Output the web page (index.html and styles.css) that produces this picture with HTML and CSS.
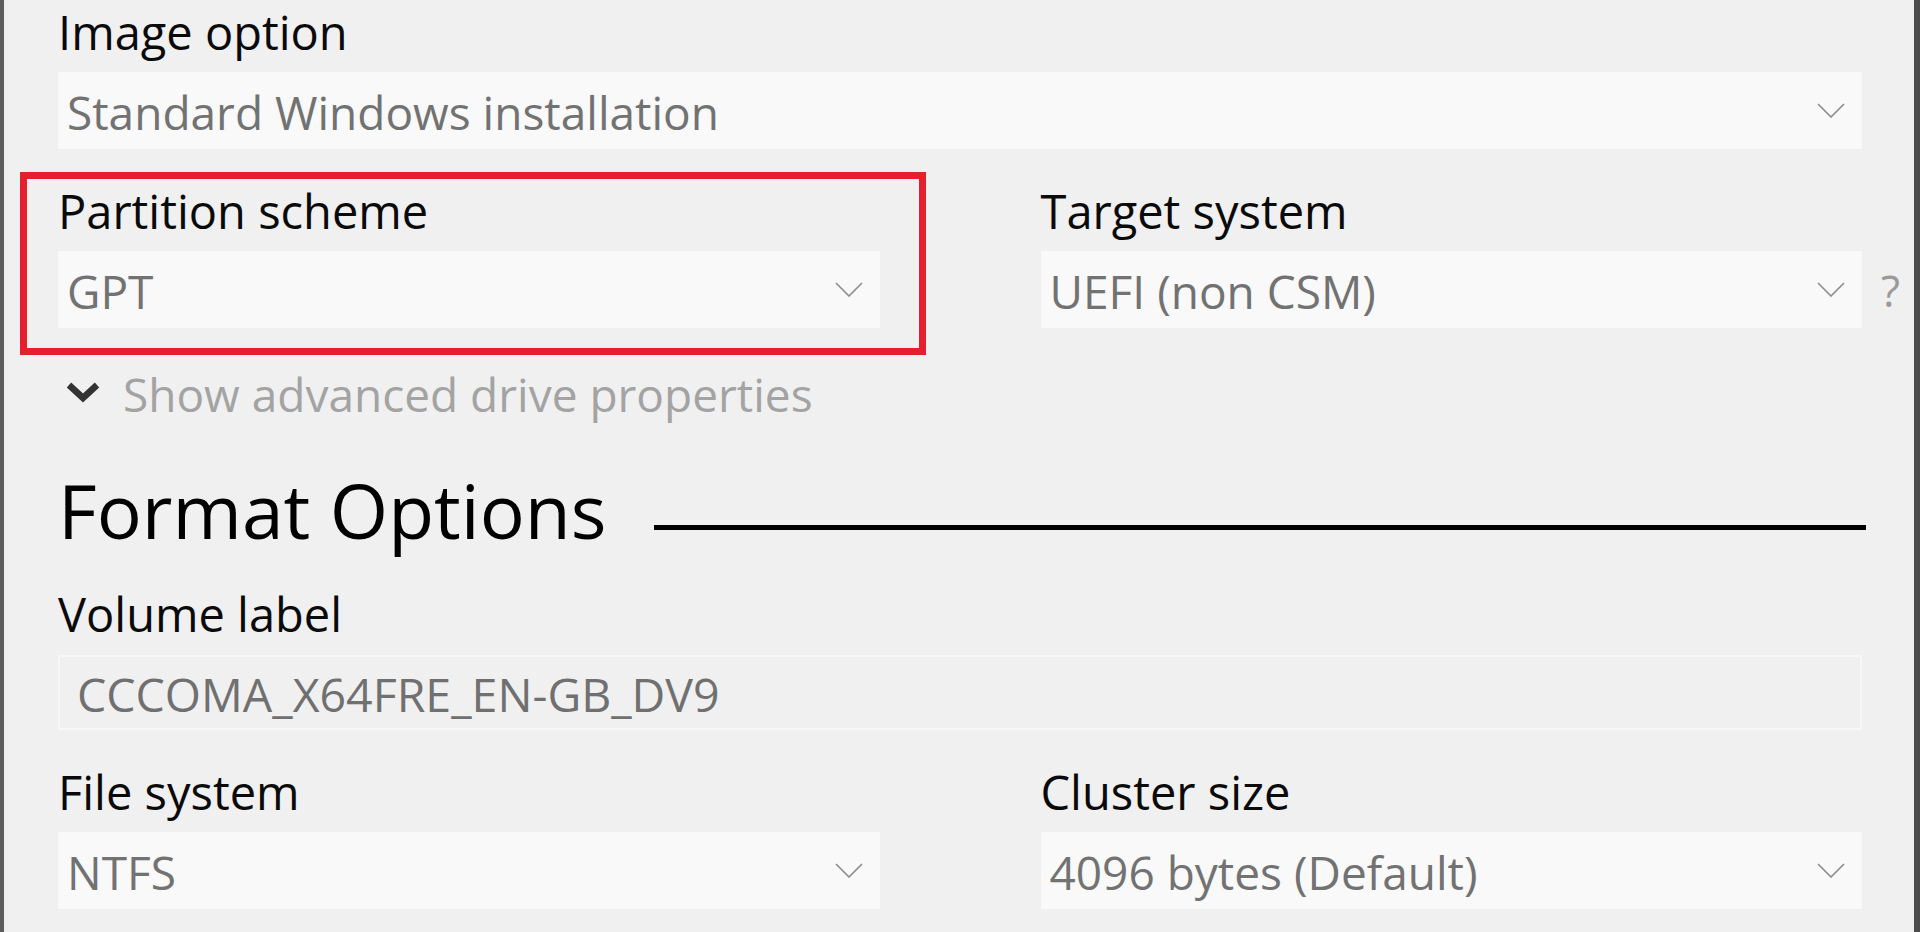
FILE: index.html
```html
<!DOCTYPE html>
<html lang="en">
<head>
<meta charset="utf-8">
<title>Drive Properties</title>
<link rel="stylesheet" href="styles.css">
</head>
<body>
<div class="window">
  <section class="field">
    <div class="label">Image option</div>
    <div class="select">
      <span class="value">Standard Windows installation</span>
      <svg class="chev" width="28" height="15" viewBox="0 0 28 15"><polyline points="1,1 14,14 27,1" fill="none" stroke="#8c8c8c" stroke-width="1.6"/></svg>
    </div>
  </section>

  <div class="row">
    <section class="field highlighted">
      <div class="label">Partition scheme</div>
      <div class="select">
        <span class="value">GPT</span>
        <svg class="chev" width="28" height="15" viewBox="0 0 28 15"><polyline points="1,1 14,14 27,1" fill="none" stroke="#8c8c8c" stroke-width="1.6"/></svg>
      </div>
    </section>
    <section class="field">
      <div class="label">Target system</div>
      <div class="select with-help">
        <span class="value">UEFI (non CSM)</span>
        <svg class="chev" width="28" height="15" viewBox="0 0 28 15"><polyline points="1,1 14,14 27,1" fill="none" stroke="#8c8c8c" stroke-width="1.6"/></svg>
        <span class="help">?</span>
      </div>
    </section>
  </div>

  <div class="advanced">
    <svg class="adv-chev" width="36" height="22" viewBox="0 0 36 22"><polyline points="4,4 18,17 32,4" fill="none" stroke="#333333" stroke-width="6.5" stroke-linejoin="miter"/></svg>
    <span>Show advanced drive properties</span>
  </div>

  <h2 class="section-title"><span>Format Options</span><span class="rule"></span></h2>

  <section class="field spaced">
    <div class="label">Volume label</div>
    <div class="textbox">CCCOMA_X64FRE_EN-GB_DV9</div>
  </section>

  <div class="row">
    <section class="field">
      <div class="label">File system</div>
      <div class="select">
        <span class="value">NTFS</span>
        <svg class="chev" width="28" height="15" viewBox="0 0 28 15"><polyline points="1,1 14,14 27,1" fill="none" stroke="#8c8c8c" stroke-width="1.6"/></svg>
      </div>
    </section>
    <section class="field">
      <div class="label">Cluster size</div>
      <div class="select">
        <span class="value">4096 bytes (Default)</span>
        <svg class="chev" width="28" height="15" viewBox="0 0 28 15"><polyline points="1,1 14,14 27,1" fill="none" stroke="#8c8c8c" stroke-width="1.6"/></svg>
      </div>
    </section>
  </div>
</div>
</body>
</html>
```

FILE: styles.css
```css
html, body {
  margin: 0;
  padding: 0;
  background: #f0f0f0;
}
body {
  width: 1920px;
  height: 932px;
  overflow: hidden;
  font-family: "Open Sans", "Noto Sans", "DejaVu Sans", sans-serif;
}
.window {
  box-sizing: border-box;
  height: 932px;
  border-left: 4px solid #5c5c5c;
  border-right: 6px solid #4c4c4c;
  padding: 4px 52px 0 54px;
}
.field {
  position: relative;
  display: flex;
  flex-direction: column;
}
.field.spaced {
  margin-top: 33px;
}
.label {
  font-size: 47px;
  line-height: 56px;
  color: #0a0a0a;
  white-space: nowrap;
}
.select {
  position: relative;
  margin-top: 12px;
  height: 77px;
  background: #f9f9f9;
  display: flex;
  align-items: center;
  justify-content: space-between;
  padding: 3px 17px 0 9px;
  box-sizing: border-box;
}
.value {
  font-size: 46px;
  line-height: 56px;
  color: #727272;
  white-space: nowrap;
}
.chev {
  display: block;
  margin-top: -3px;
}
.help {
  position: absolute;
  right: -38px;
  top: 50%;
  transform: translateY(-50%);
  font-size: 44px;
  line-height: 56px;
  color: #9a9a9a;
}
.row {
  display: grid;
  grid-template-columns: 1fr 1fr;
  column-gap: 161px;
  margin-top: 34px;
}
.highlighted::after {
  content: "";
  position: absolute;
  left: -38px;
  right: -46px;
  top: -11px;
  bottom: -27px;
  border: 7px solid #e3202b;
  pointer-events: none;
}
.advanced {
  margin-top: 38px;
  display: flex;
  align-items: center;
  padding-left: 7px;
  gap: 22px;
  font-size: 46px;
  line-height: 56px;
  color: #a3a3a3;
}
.adv-chev {
  display: block;
  margin-top: -4px;
}
.section-title {
  margin: 45px 0 0 0;
  display: flex;
  align-items: flex-start;
  font-weight: normal;
  font-size: 75px;
  line-height: 86px;
  color: #000;
}
.section-title .rule {
  flex: 1;
  height: 5px;
  background: #000;
  margin: 58px -4px 0 47px;
}
.textbox {
  margin-top: 13px;
  height: 75px;
  box-sizing: border-box;
  border: 2px solid #f7f7f7;
  background: #f0f0f0;
  display: flex;
  align-items: center;
  padding: 3px 0 0 17px;
  font-size: 46.5px;
  line-height: 56px;
  color: #707070;
  white-space: nowrap;
}
```
